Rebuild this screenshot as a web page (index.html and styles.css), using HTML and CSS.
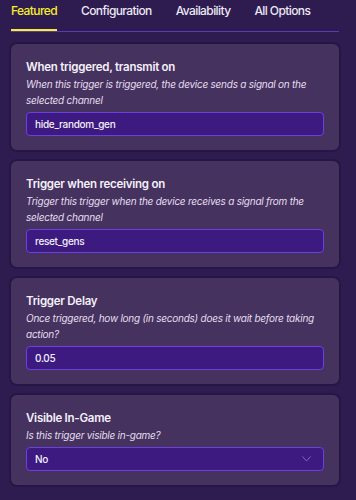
FILE: index.html
```html
<!DOCTYPE html>
<html lang="en">
<head>
    <meta charset="UTF-8">
    <meta name="viewport" content="width=device-width, initial-scale=1.0">
    <title>Trigger Options</title>
    <link rel="stylesheet" href="styles.css">
</head>
<body>

    <!-- Tabs -->
    <div class="tabs">
        <div class="tab active">Featured</div>
        <div class="tab">Configuration</div>
        <div class="tab">Availability</div>
        <div class="tab">All Options</div>
    </div>

    <!-- Option cards -->
    <div class="options">
        <div class="card">
            <div class="card-title">When triggered, transmit on</div>
            <div class="card-desc">When this trigger is triggered, the device sends a signal on the selected channel</div>
            <div class="field">hide_random_gen</div>
        </div>

        <div class="card">
            <div class="card-title">Trigger when receiving on</div>
            <div class="card-desc">Trigger this trigger when the device receives a signal from the selected channel</div>
            <div class="field">reset_gens</div>
        </div>

        <div class="card">
            <div class="card-title">Trigger Delay</div>
            <div class="card-desc">Once triggered, how long (in seconds) does it wait before taking action?</div>
            <div class="field">0.05</div>
        </div>

        <div class="card">
            <div class="card-title">Visible In-Game</div>
            <div class="card-desc">Is this trigger visible in-game?</div>
            <div class="field select">
                <span>No</span>
                <svg class="chevron" width="9" height="6" viewBox="0 0 9 6">
                    <path d="M0.5 0.5 L4.5 5 L8.5 0.5" fill="none" stroke="#8466c6" stroke-width="1"/>
                </svg>
            </div>
        </div>
    </div>

</body>
</html>
```

FILE: styles.css
```css
body {
    font-family: Inter, "Noto Sans", sans-serif;
    background-color: #2e1c50;
    color: #f2eef8;
    margin: 0;
    width: 356px;
    height: 500px;
    overflow: hidden;
}

/* Tabs */
.tabs {
    display: flex;
    gap: 24px;
    margin: 0 17px 0 11px;
    border-bottom: 1px solid #5a3ab4;
}

.tab {
    font-size: 12px;
    font-weight: 500;
    letter-spacing: -0.6px;
    color: #ece8f4;
    padding-top: 3px;
    line-height: 16px;
    box-sizing: border-box;
    height: 31px;
}

.tab.active {
    color: #f6f02a;
    border-bottom: 2px solid #f6f02a;
    margin-bottom: -1px;
}

/* Cards */
.options {
    display: flex;
    flex-direction: column;
    gap: 11px;
    padding: 12px 17px 0 11px;
}

.card {
    background-color: #46325f;
    border-radius: 6px;
    padding: 15px 15px 14px;
    box-shadow: 0 0 0 2px rgba(30, 16, 52, 0.4);
}

.card-title {
    font-size: 11.5px;
    font-weight: 600;
    letter-spacing: -0.25px;
    line-height: 17px;
    color: #f4f0fa;
}

.card-desc {
    font-size: 10px;
    font-style: italic;
    letter-spacing: -0.25px;
    line-height: 16px;
    color: #e4deee;
}

.field {
    margin-top: 4px;
    height: 24px;
    box-sizing: border-box;
    border: 1px solid #6c40de;
    border-radius: 4px;
    background-color: #3c1a80;
    color: #f4f0fa;
    font-size: 10px;
    font-weight: 500;
    letter-spacing: -0.3px;
    line-height: 22px;
    padding: 0 8px;
}

.select {
    display: flex;
    justify-content: space-between;
    align-items: center;
}

.chevron {
    margin-right: 4px;
}
```
